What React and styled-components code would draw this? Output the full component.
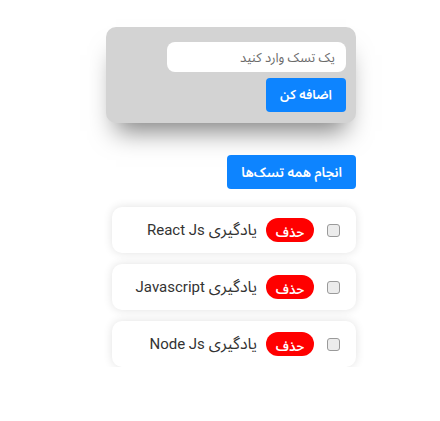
import React from "react";
import styled, { createGlobalStyle } from "styled-components";

const GlobalStyle = createGlobalStyle`
  body {
    margin: 0;
    background: #fff;
    font-family: Roboto, "Noto Sans Arabic", sans-serif;
  }
`;

const Page = styled.div`
  direction: rtl;
  width: 250px;
  margin-left: 106px;
  padding-top: 27px;
  display: flex;
  flex-direction: column;
  align-items: flex-start;
`;

const FormCard = styled.form`
  width: 250px;
  box-sizing: border-box;
  background: #d3d3d3;
  border-radius: 10px;
  padding: 15px 10px 11px;
  display: flex;
  flex-direction: column;
  align-items: flex-start;
  gap: 6px;
  box-shadow: 0 18px 24px -10px rgba(0, 0, 0, 0.5);
`;

const Input = styled.input`
  width: 179px;
  height: 30px;
  box-sizing: border-box;
  border: none;
  outline: none;
  border-radius: 8px;
  background: #fff;
  padding: 0 11px;
  font-family: inherit;
  font-size: 13px;
  direction: rtl;

  &::placeholder {
    color: #6b6b6b;
  }
`;

const Button = styled.button`
  height: 34px;
  padding: 0 ${(p) => p.$pad || 12}px;
  border: none;
  border-radius: 4px;
  background: #0d84ff;
  color: #fff;
  font-family: inherit;
  font-size: ${(p) => p.$size || 13}px;
  font-weight: 600;
  cursor: pointer;
`;

const AllButton = styled(Button)`
  margin-top: 32px;
`;

const List = styled.ul`
  list-style: none;
  margin: 18px 0 0;
  padding: 0;
  display: flex;
  flex-direction: column;
  gap: 11px;
`;

const Row = styled.li`
  width: 244px;
  height: 46px;
  box-sizing: border-box;
  background: #fff;
  border-radius: 10px;
  box-shadow: 0 0 10px rgba(0, 0, 0, 0.12);
  display: flex;
  align-items: center;
  padding-right: 16px;
`;

const Check = styled.input`
  appearance: none;
  width: 13px;
  height: 13px;
  box-sizing: border-box;
  margin: 0 0 0 13px;
  border: 1px solid #9a9a9a;
  border-radius: 3px;
  background: #ececec;
`;

const DeleteButton = styled.button`
  width: 48px;
  height: 24px;
  border: none;
  border-radius: 12px;
  background: #ff0000;
  color: #fff;
  font-family: inherit;
  font-size: 13px;
  font-weight: 600;
  margin-left: 9px;
  cursor: pointer;
`;

const Title = styled.span`
  display: flex;
  align-items: center;
  gap: 4px;
  font-size: 15px;
  color: #333;
`;

const Fa = styled.span`
  font-size: 16px;
  line-height: 1;
`;

const tasks = ["React Js", "Javascript", "Node Js"];

export default function App() {
  return (
    <>
      <GlobalStyle />
      <Page>
        <FormCard onSubmit={(e) => e.preventDefault()}>
          <Input placeholder="یک تسک وارد کنید" />
          <Button $pad={14}>اضافه کن</Button>
        </FormCard>
        <AllButton $pad={14} $size={13.5}>انجام همه تسک‌ها</AllButton>
        <List>
          {tasks.map((t) => (
            <Row key={t}>
              <Check type="checkbox" />
              <DeleteButton>حذف</DeleteButton>
              <Title>
                <Fa>یادگیری</Fa> {t}
              </Title>
            </Row>
          ))}
        </List>
      </Page>
    </>
  );
}
